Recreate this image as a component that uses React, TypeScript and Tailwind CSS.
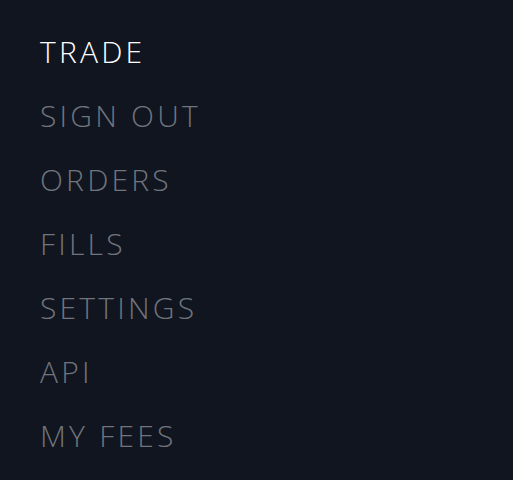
const items = ['TRADE', 'SIGN OUT', 'ORDERS', 'FILLS', 'SETTINGS', 'API', 'MY FEES'];

export default function App() {
  return (
    <div className="h-[480px] w-[513px] bg-[#11151f] pt-[19px] pl-10" style={{ fontFamily: '"Open Sans", sans-serif' }}>
      <nav className="flex flex-col">
        {items.map((item, i) => (
          <a
            key={item}
            href="#"
            className={`flex h-16 items-center text-[30px] font-light tracking-[3.2px] ${
              i === 0 ? 'text-white' : 'text-[#6f747d]'
            }`}
          >
            {item}
          </a>
        ))}
      </nav>
    </div>
  );
}
